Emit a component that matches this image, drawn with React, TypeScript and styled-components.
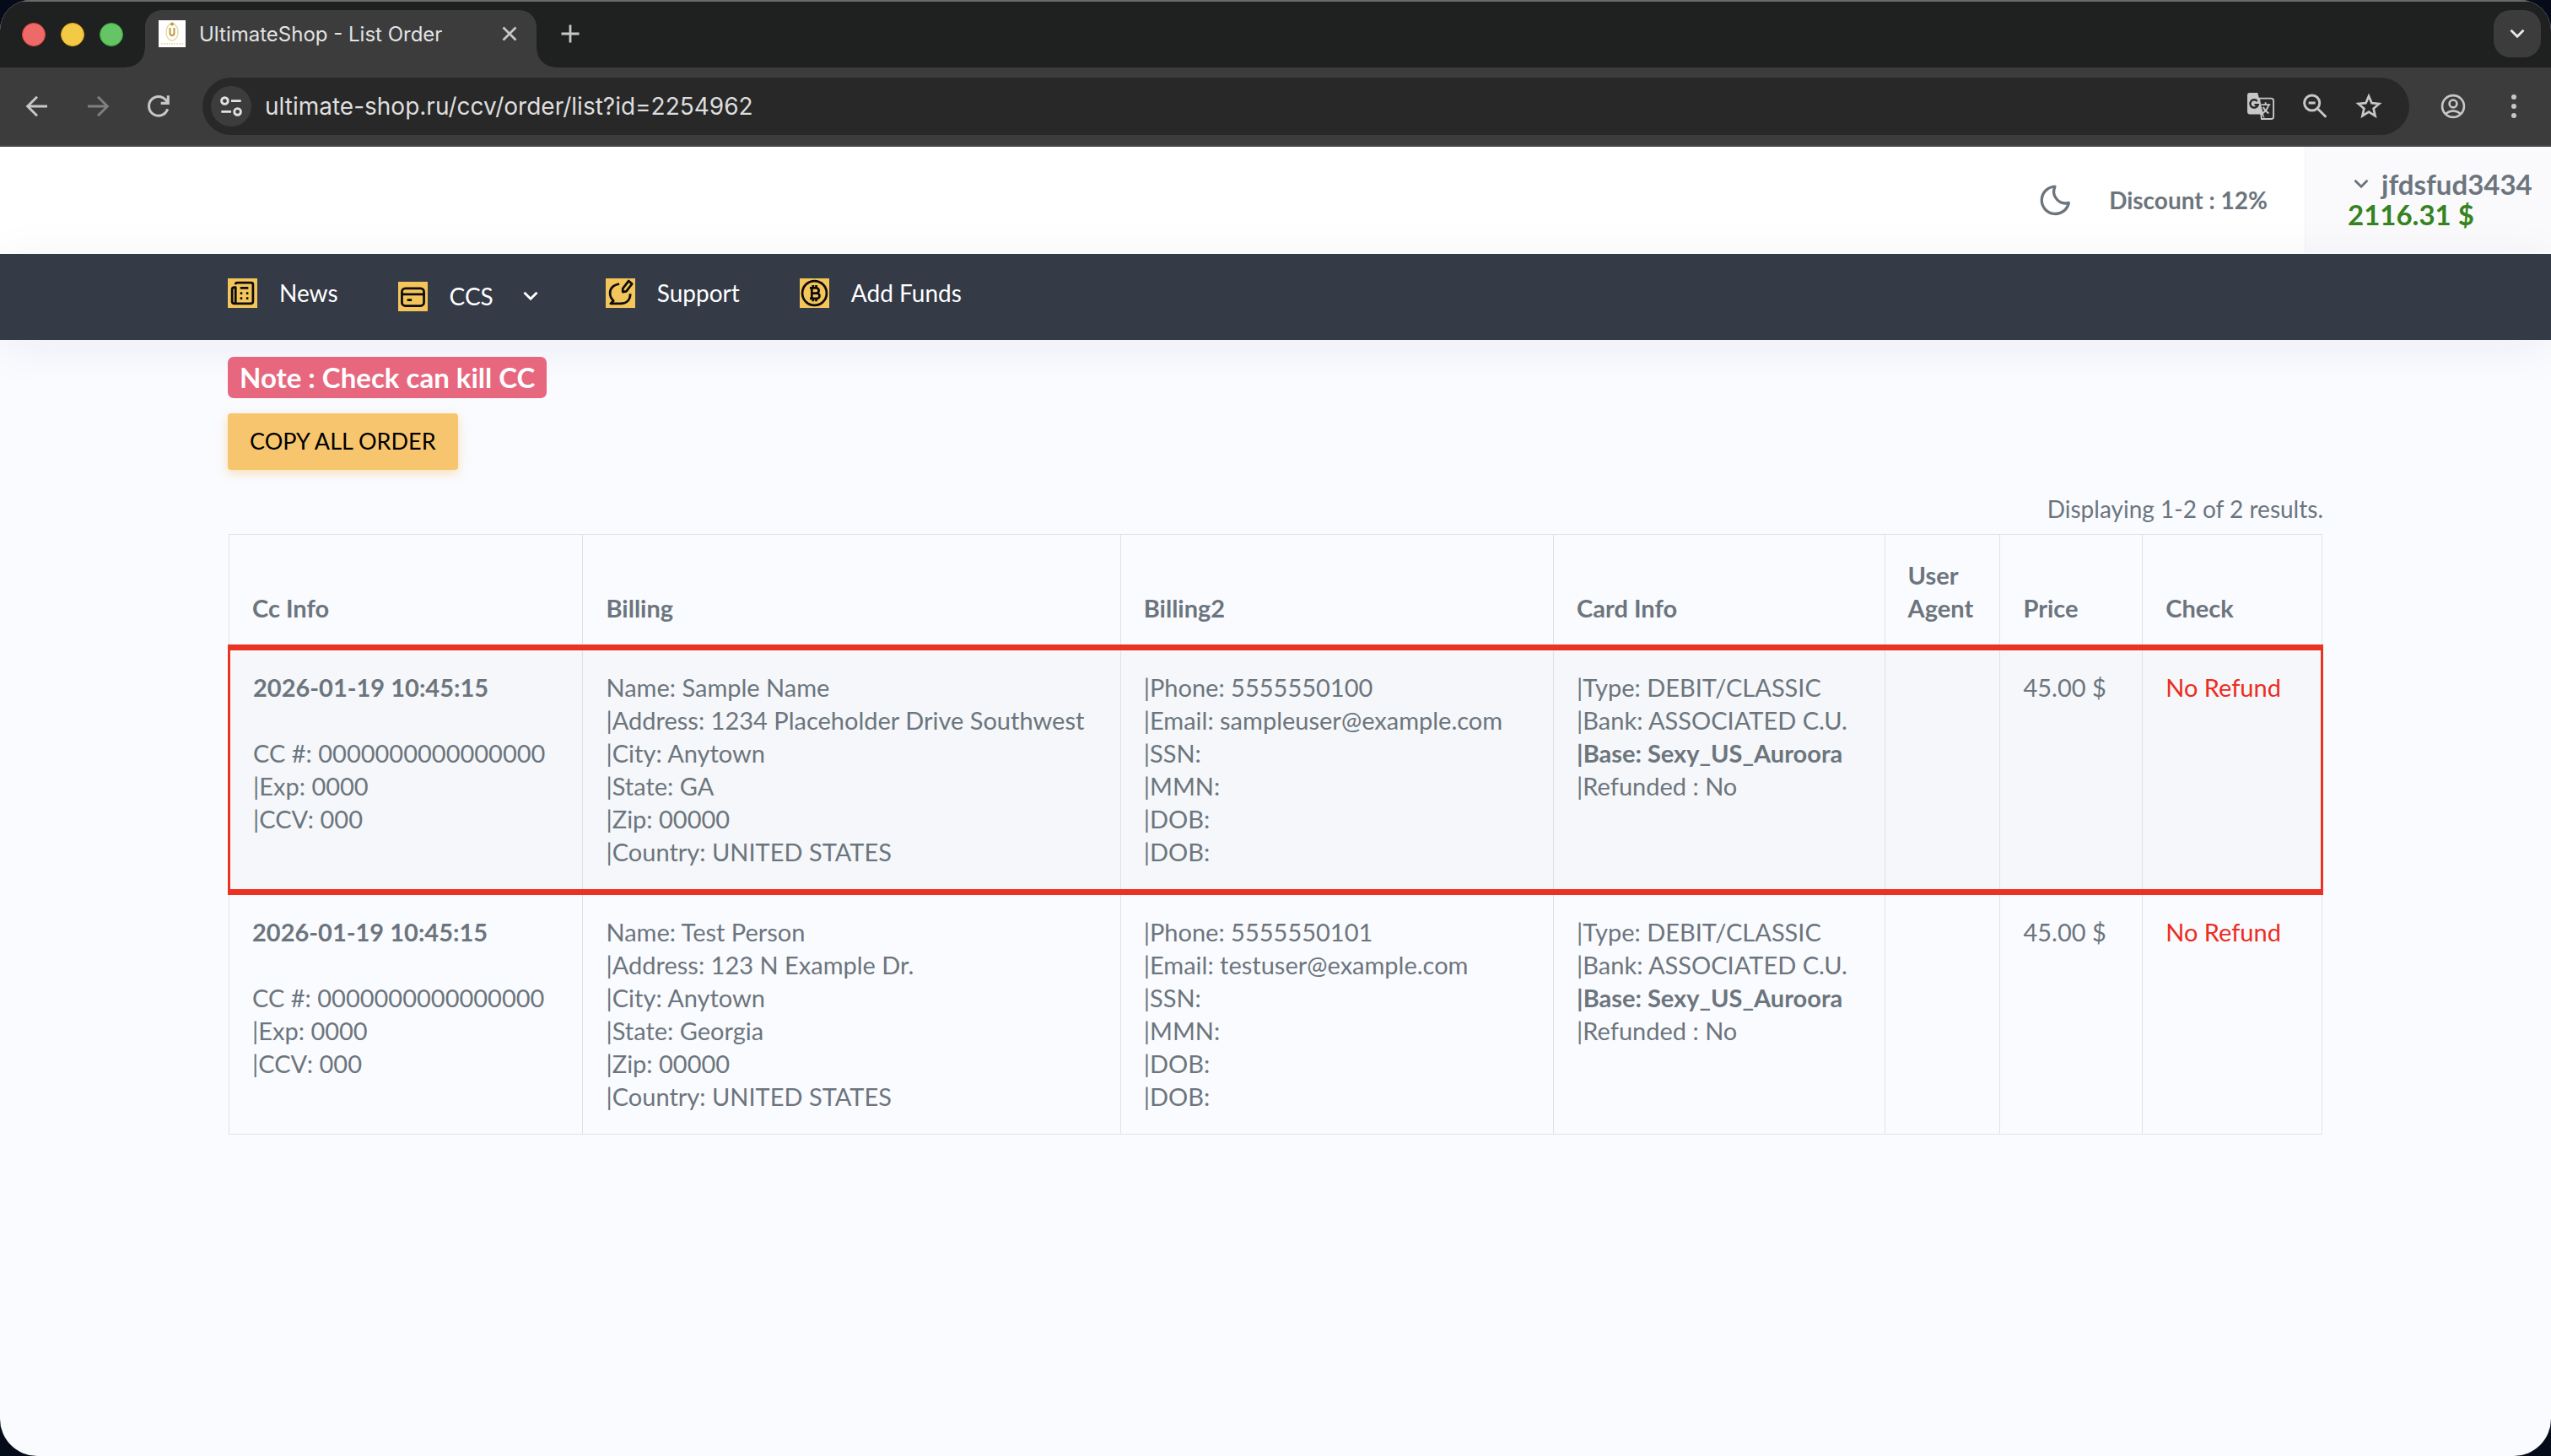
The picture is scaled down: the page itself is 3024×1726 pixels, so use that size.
import React from "react";
import styled, { createGlobalStyle } from "styled-components";

const chromeFont = `Inter, Roboto, "Liberation Sans", sans-serif`;
const pageFont = `Lato, "Open Sans", "Noto Sans", sans-serif`;

const Global = createGlobalStyle`
  *, *::before, *::after { box-sizing: border-box; }
  html { background: #050b18; }
  body { margin: 0; font-family: ${pageFont}; color: #6c757d; }
  button, input { font: inherit; }
`;

const Window = styled.div`
  min-height: 100vh;
  display: flex;
  flex-direction: column;
  background: #fafbff;
  border-radius: 36px 36px 44px 44px;
  overflow: hidden;
`;

const TabStrip = styled.header`
  display: flex;
  align-items: flex-end;
  height: 80px;
  padding: 0 12px 0 26px;
  background: #1f2120;
  border-top: 2px solid #696b6a;
  font-family: ${chromeFont};
`;

const Lights = styled.div`
  display: flex;
  gap: 18px;
  margin-right: 26px;
  padding-bottom: 25px;
`;

const Light = styled.span<{ $color: string; $edge: string }>`
  width: 28px;
  height: 28px;
  border-radius: 50%;
  background: ${(p) => p.$color};
  border: 1px solid ${(p) => p.$edge};
`;

const Tab = styled.div`
  position: relative;
  display: flex;
  align-items: center;
  width: 464px;
  height: 68px;
  padding: 0 16px 12px;
  background: #3c3c3c;
  border-radius: 20px 20px 0 0;
  color: #e3e3e3;
  font-size: 24px;

  &::before,
  &::after {
    content: "";
    position: absolute;
    bottom: 0;
    width: 22px;
    height: 22px;
  }
  &::before {
    left: -22px;
    background: radial-gradient(circle at 0 0, transparent 21px, #3c3c3c 22px);
  }
  &::after {
    right: -22px;
    background: radial-gradient(circle at 100% 0, transparent 21px, #3c3c3c 22px);
  }
`;

const TabTitle = styled.span`
  flex: 1;
  margin-left: 16px;
  white-space: nowrap;
`;

const IconButton = styled.button<{ $size?: number; $dim?: boolean }>`
  display: flex;
  flex: none;
  align-items: center;
  justify-content: center;
  width: ${(p) => p.$size ?? 32}px;
  height: ${(p) => p.$size ?? 32}px;
  padding: 0;
  border: 0;
  background: none;
  color: ${(p) => (p.$dim ? "#7f7f7f" : "#c7c7c7")};
`;

const NewTab = styled(IconButton)`
  margin: 0 auto 24px 24px;
`;

const TabSearch = styled(IconButton)`
  margin-bottom: 12px;
  border-radius: 20px;
  background: #3c3c3c;
  color: #e8e8e8;
`;

const Toolbar = styled.div`
  display: flex;
  align-items: center;
  height: 94px;
  padding: 0 28px;
  background: #3c3c3c;
  border-bottom: 2px solid #494848;
  font-family: ${chromeFont};
`;

const NavButtons = styled.div`
  display: flex;
  gap: 40px;
  margin-right: 36px;
`;

const AddressBar = styled.div`
  display: flex;
  flex: 1;
  align-items: center;
  height: 68px;
  padding: 0 32px 0 10px;
  border-radius: 34px;
  background: #282828;
`;

const SiteInfo = styled(IconButton)`
  border-radius: 50%;
  background: #3c3c3c;
  color: #e3e3e3;
`;

const Url = styled.input`
  flex: 1;
  margin-left: 16px;
  padding: 0;
  border: 0;
  outline: 0;
  background: none;
  color: #dedede;
  font-size: 28px;
`;

const BarActions = styled.div`
  display: flex;
  gap: 32px;
`;

const ToolbarEnd = styled.div`
  display: flex;
  gap: 40px;
  margin-left: 36px;
`;

const AccountBar = styled.div`
  display: flex;
  justify-content: flex-end;
  align-items: stretch;
  height: 127px;
  padding-bottom: 2px;
  background: #fff;
`;

const Theme = styled(IconButton)`
  align-self: center;
  margin-right: 44px;
  color: #6c757d;
`;

const Discount = styled.span`
  align-self: center;
  margin-right: 44px;
  font-size: 28px;
  font-weight: 700;
`;

const Account = styled.div`
  width: 292px;
  padding: 26px 16px 0 50px;
  background: #fafafd;
  border-left: 1px solid #f0f2f8;
  font-size: 33px;
  font-weight: 700;
  line-height: 36px;
`;

const UserName = styled.button`
  display: flex;
  align-items: center;
  gap: 14px;
  padding: 0 0 0 6px;
  border: 0;
  background: none;
  color: #6c757d;
  font-weight: 700;
  line-height: 36px;
`;

const Balance = styled.div`
  color: #36831f;
`;

const MainNav = styled.nav`
  height: 102px;
  padding: 0 270px;
  background: #343a46;
  box-shadow: 0 8px 60px rgba(20, 30, 60, 0.06);
`;

const NavList = styled.ul`
  display: flex;
  gap: 71px;
  margin: 0;
  padding: 26px 0 0;
  list-style: none;
`;

const NavLink = styled.a<{ $menu?: boolean }>`
  display: flex;
  align-items: center;
  gap: 26px;
  height: 40px;
  margin-top: ${(p) => (p.$menu ? 4 : 0)}px;
  padding-right: ${(p) => (p.$menu ? 8 : 0)}px;
  color: #fff;
  font-size: 28px;
  text-decoration: none;

  & > svg {
    margin-left: 8px;
  }
`;

const NavBadge = styled.span`
  display: flex;
  width: 35px;
  height: 35px;
  align-items: center;
  justify-content: center;
  background: #f4c55a;
  color: #0c0c0c;
`;

const Content = styled.main`
  display: flex;
  flex-direction: column;
  align-items: flex-start;
  padding: 20px 270px 40px;
`;

const Note = styled.strong`
  padding: 0 14px;
  border-radius: 7px;
  background: #e7677f;
  color: #fff;
  font-size: 33px;
  line-height: 49px;
`;

const CopyButton = styled.button`
  height: 67px;
  margin-top: 18px;
  padding: 0 26px 2px;
  border: 0;
  border-radius: 4px;
  background: #f7c56d;
  box-shadow: 0 4px 12px rgba(247, 197, 109, 0.5);
  color: #000;
  font-size: 27px;
`;

const Summary = styled.p`
  align-self: flex-end;
  margin: 26px 0 10px;
  font-size: 28px;
  line-height: 40px;
`;

const Orders = styled.table`
  width: 100%;
  table-layout: fixed;
  border-collapse: collapse;
  font-size: 29px;
  line-height: 39px;
`;

const HeadCell = styled.th`
  padding: 28px 27px 24px;
  border: 1px solid #dee2e6;
  text-align: left;
  vertical-align: bottom;
`;

const Row = styled.tr<{ $marked: boolean }>`
  ${(p) =>
    p.$marked &&
    `
    background: #f5f7fa;
    border: 3px solid #eb3323;
    border-top-width: 7px;
    border-bottom-width: 7px;
  `}
`;

const Cell = styled.td`
  padding: 24px 0 25px 27px;
  border-left: 1px solid #dee2e6;
  border-right: 1px solid #dee2e6;
  vertical-align: top;
  white-space: nowrap;

  tr:last-child > & {
    border-bottom: 1px solid #dee2e6;
  }
`;

const Line = styled.div<{ $bold?: boolean }>`
  min-height: 39px;
  font-weight: ${(p) => (p.$bold ? 700 : 400)};
`;

const Refund = styled.span`
  color: #ed2b20;
`;

type IconProps = { size: number; width?: number; children: React.ReactNode };
const Icon = ({ size, width = 2, children }: IconProps) => (
  <svg width={size} height={size} viewBox="0 0 24 24" fill="none" stroke="currentColor" strokeWidth={width} aria-hidden="true">
    {children}
  </svg>
);

const ChevronIcon = ({ size }: { size: number }) => (
  <Icon size={size} width={3.4}>
    <path d="M3 7l9 9 9-9" />
  </Icon>
);

const navItems = [
  {
    label: "News",
    icon: (
      <Icon size={33}>
        <path d="M6 4.500q0-1.500 1.500-1.500h12q1.500 0 1.500 1.500v14.500q0 2-2 2H5q-2 0-2-2V9q0-2 2-2h1v12q0 2-1 2" strokeLinejoin="round" />
        <path d="M10 7.500h7M10 12h1.800M15.200 12H17M10 16.500h1.800M15.200 16.500H17" />
      </Icon>
    ),
  },
  {
    label: "CCS",
    menu: true,
    icon: (
      <Icon size={33}>
        <rect x="2.500" y="5" width="19" height="15" rx="3" />
        <path d="M2.500 10h19M7 15h4" />
      </Icon>
    ),
  },
  {
    label: "Support",
    icon: (
      <Icon size={33}>
        <path d="M11 4C6 5 3 8 3 12c0 3 1 4.800 3 6.500L3.500 21H12c6 0 8.500-4 8.500-8.500" strokeLinejoin="round" />
        <path d="M14 8l5-6.500 3 2.500-5 6.500-3 .5z" strokeLinejoin="round" />
      </Icon>
    ),
  },
  {
    label: "Add Funds",
    icon: (
      <Icon size={33}>
        <circle cx="12" cy="12" r="10.500" />
        <path d="M8 7.500h5.500a2.200 2.200 0 010 4.500H9.500h4.500a2.300 2.300 0 010 4.700H8M9.700 7.500v9M10.800 5v2.500M13.500 5v2.500M10.800 16.700V19M13.500 16.700V19" />
      </Icon>
    ),
  },
];

const columns = [
  { title: "Cc Info", share: 420 },
  { title: "Billing", share: 638 },
  { title: "Billing2", share: 514 },
  { title: "Card Info", share: 393 },
  { title: "User Agent", share: 137 },
  { title: "Price", share: 169 },
  { title: "Check", share: 213 },
];
const totalShare = columns.reduce((sum, c) => sum + c.share, 0);

// Dummy values only: no real cardholder data in this view.
const orders = [
  {
    marked: true,
    info: ["CC #: 0000000000000000", "|Exp: 0000", "|CCV: 000"],
    billing: ["Name: Sample Name", "|Address: 1234 Placeholder Drive Southwest", "|City: Anytown", "|State: GA", "|Zip: 00000", "|Country: UNITED STATES"],
    contact: ["|Phone: 5555550100", "|Email: sampleuser@example.com"],
  },
  {
    marked: false,
    info: ["CC #: 0000000000000000", "|Exp: 0000", "|CCV: 000"],
    billing: ["Name: Test Person", "|Address: 123 N Example Dr.", "|City: Anytown", "|State: Georgia", "|Zip: 00000", "|Country: UNITED STATES"],
    contact: ["|Phone: 5555550101", "|Email: testuser@example.com"],
  },
];

const Lines = ({ items }: { items: string[] }) => (
  <>
    {items.map((text, i) => (
      <Line key={i} $bold={text.startsWith("|Base") || text.startsWith("2026")}>
        {text}
      </Line>
    ))}
  </>
);

export default function App() {
  return (
    <>
      <Global />
      <Window>
        <TabStrip>
          <Lights>
            <Light $color="#ed6a68" $edge="#e2463f" />
            <Light $color="#f4c945" $edge="#dfa91c" />
            <Light $color="#65c466" $edge="#3ba53a" />
          </Lights>
          <Tab>
            <svg width="32" height="32" viewBox="0 0 32 32" fill="none" aria-hidden="true">
              <path d="M0 0h32v32H0z" fill="#fff" />
              <ellipse cx="16" cy="14" rx="7" ry="10" stroke="#e8d9a8" strokeWidth="1.500" />
              <path d="M13.500 9v6q0 3 2.500 3t2.500-3V9" stroke="#c19a3a" strokeWidth="2" />
              <circle cx="16" cy="4.500" r="2" fill="#c19a3a" />
              <path d="M3 28h26" stroke="#eee3c2" strokeWidth="2" strokeDasharray="2 1" />
            </svg>
            <TabTitle>UltimateShop - List Order</TabTitle>
            <IconButton aria-label="Close tab">
              <Icon size={24} width={2.8}><path d="M4.500 4.500l15 15M19.500 4.500l-15 15" /></Icon>
            </IconButton>
          </Tab>
          <NewTab aria-label="New tab">
            <Icon size={28} width={2.4}><path d="M12 3v18M3 12h18" /></Icon>
          </NewTab>
          <TabSearch $size={56} aria-label="Search tabs">
            <ChevronIcon size={20} />
          </TabSearch>
        </TabStrip>

        <Toolbar>
          <NavButtons>
            <IconButton aria-label="Back">
              <Icon size={32} width={2.2}><path d="M21 12H4M12 3.500L3.500 12l8.500 8.500" /></Icon>
            </IconButton>
            <IconButton $dim aria-label="Forward">
              <Icon size={32} width={2.2}><path d="M3 12h17M12 3.500l8.500 8.500-8.500 8.500" /></Icon>
            </IconButton>
            <IconButton aria-label="Reload">
              <Icon size={32} width={2.300}><path d="M20 14.500A8.500 8.500 0 1118.500 6.500L20.500 9M20.500 2.500V9.300H14" /></Icon>
            </IconButton>
          </NavButtons>
          <AddressBar>
            <SiteInfo $size={48} aria-label="Site information">
              <Icon size={28} width={2.4}>
                <circle cx="5.500" cy="6.500" r="3.300" />
                <path d="M12 6.500h10M2 17.500h10" />
                <circle cx="18.500" cy="17.500" r="3.300" />
              </Icon>
            </SiteInfo>
            <Url aria-label="Address" defaultValue="ultimate-shop.ru/ccv/order/list?id=2254962" />
            <BarActions>
              <IconButton aria-label="Translate">
                <svg width="34" height="34" viewBox="0 0 34 34" fill="none" aria-hidden="true">
                  <path d="M15 7h15q3 0 3 3v20q0 3-3 3H18z" stroke="#c7c7c7" strokeWidth="2" />
                  <path d="M3 0h10l9 33-4-6H3q-3 0-3-3V3q0-3 3-3z" fill="#c7c7c7" />
                  <path d="M12.500 10.500a5 5 0 101 4.500H9" stroke="#282828" strokeWidth="2.500" />
                  <path d="M17.500 15H29M23 12v3M27 15q-2 7-8 11M20 18q2 5 7 8" stroke="#c7c7c7" strokeWidth="2" />
                </svg>
              </IconButton>
              <IconButton aria-label="Zoom">
                <Icon size={32} width={2.200}>
                  <circle cx="9.500" cy="9" r="6.800" />
                  <path d="M14.500 14l7.500 7.500M6.500 9h6" />
                </Icon>
              </IconButton>
              <IconButton aria-label="Bookmark">
                <Icon size={34}>
                  <path d="M12 3l2.600 6.100 6.600.6-5 4.300 1.500 6.500-5.700-3.500-5.700 3.500L7.800 14l-5-4.300 6.600-.6z" />
                </Icon>
              </IconButton>
            </BarActions>
          </AddressBar>
          <ToolbarEnd>
            <IconButton aria-label="Profile">
              <Icon size={38} width={2}>
                <circle cx="12" cy="12" r="9.700" />
                <circle cx="12" cy="9.700" r="3.300" />
                <path d="M5.500 18.500q6.500-5 13 0" />
              </Icon>
            </IconButton>
            <IconButton aria-label="Menu">
              <svg width="32" height="32" viewBox="0 0 32 32" fill="currentColor" aria-hidden="true">
                <circle cx="16" cy="5" r="3" />
                <circle cx="16" cy="16" r="3" />
                <circle cx="16" cy="27" r="3" />
              </svg>
            </IconButton>
          </ToolbarEnd>
        </Toolbar>

        <AccountBar>
          <Theme $size={40} aria-label="Dark mode">
            <Icon size={40}>
              <path d="M12 2.500A9.700 9.700 0 1021.800 14 8.300 8.300 0 0112 2.500z" strokeLinejoin="round" />
            </Icon>
          </Theme>
          <Discount>Discount : 12%</Discount>
          <Account>
            <UserName>
              <ChevronIcon size={20} />
              jfdsfud3434
            </UserName>
            <Balance>2116.31 $</Balance>
          </Account>
        </AccountBar>

        <MainNav>
          <NavList>
            {navItems.map((item) => (
              <li key={item.label}>
                <NavLink href="#" $menu={item.menu}>
                  <NavBadge>{item.icon}</NavBadge>
                  {item.label}
                  {item.menu && <ChevronIcon size={20} />}
                </NavLink>
              </li>
            ))}
          </NavList>
        </MainNav>

        <Content>
          <Note>Note : Check can kill CC</Note>
          <CopyButton>COPY ALL ORDER</CopyButton>
          <Summary>Displaying 1-2 of 2 results.</Summary>
          <Orders>
            <colgroup>
              {columns.map((c) => (
                <col key={c.title} style={{ width: `${(c.share / totalShare) * 100}%` }} />
              ))}
            </colgroup>
            <thead>
              <tr>
                {columns.map((c) => (
                  <HeadCell key={c.title} scope="col">{c.title}</HeadCell>
                ))}
              </tr>
            </thead>
            <tbody>
              {orders.map((order, i) => (
                <Row key={i} $marked={order.marked}>
                  <Cell><Lines items={["2026-01-19 10:45:15", "", ...order.info]} /></Cell>
                  <Cell><Lines items={order.billing} /></Cell>
                  <Cell><Lines items={[...order.contact, "|SSN:", "|MMN:", "|DOB:", "|DOB:"]} /></Cell>
                  <Cell><Lines items={["|Type: DEBIT/CLASSIC", "|Bank: ASSOCIATED C.U.", "|Base: Sexy_US_Auroora", "|Refunded : No"]} /></Cell>
                  <Cell />
                  <Cell>45.00 $</Cell>
                  <Cell><Refund>No Refund</Refund></Cell>
                </Row>
              ))}
            </tbody>
          </Orders>
        </Content>
      </Window>
    </>
  );
}
